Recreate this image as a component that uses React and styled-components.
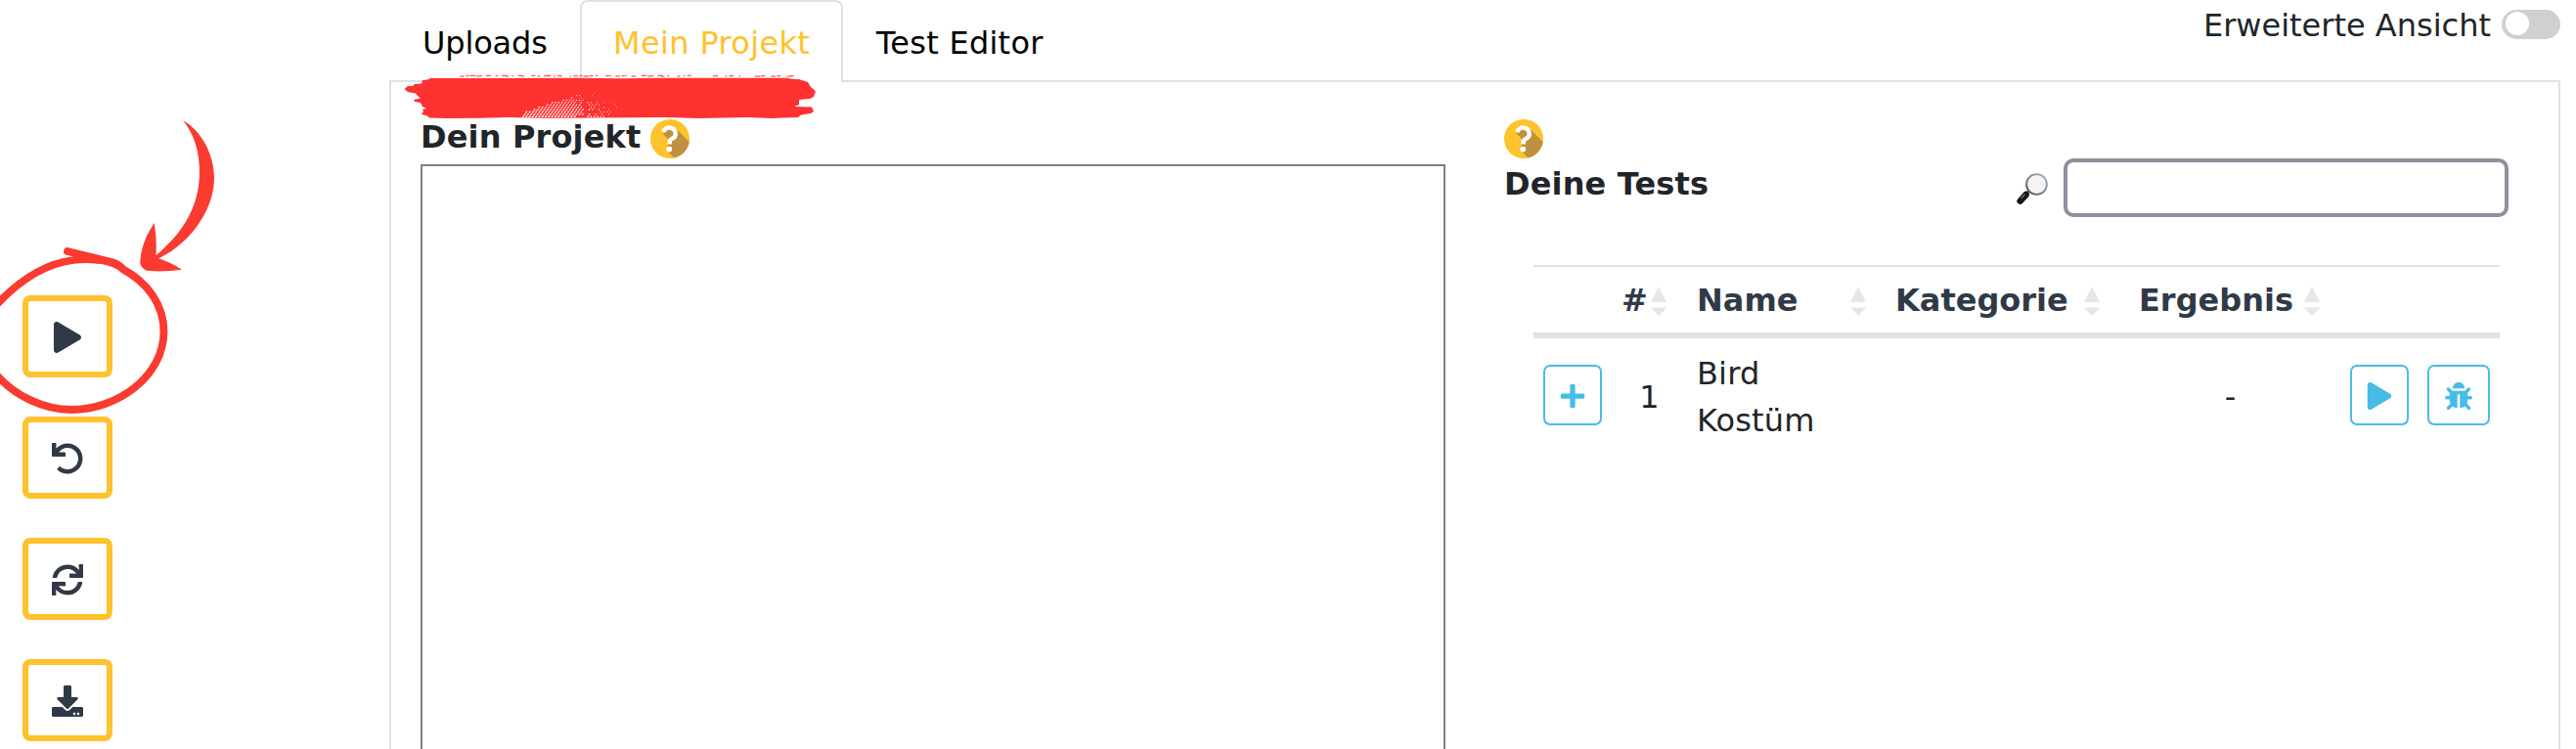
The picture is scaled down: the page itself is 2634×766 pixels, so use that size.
import React from 'react';
import styled, { createGlobalStyle } from 'styled-components';
import { FaPlay, FaUndo, FaSync, FaDownload, FaPlus, FaBug } from 'react-icons/fa';

const GlobalStyle = createGlobalStyle`
  *, *::before, *::after { box-sizing: border-box; }
  body {
    margin: 0;
    overflow: hidden;
    background: #fff;
    color: #212529;
    font-family: Verdana, "DejaVu Sans", sans-serif;
    font-size: 32px;
    line-height: 48px;
  }
`;

const Page = styled.div`
  position: relative;
  display: flex;
  height: 766px;
  overflow: hidden;
`;

const Sidebar = styled.nav`
  flex: none;
  width: 398px;
  padding: 302px 0 0 23px;
  display: flex;
  flex-direction: column;
  gap: 40px;
`;

const ToolButton = styled.button`
  flex: none;
  display: flex;
  align-items: center;
  justify-content: center;
  width: 92px;
  height: 84px;
  padding: 2px 0 0;
  border: 6px solid #ffc22d;
  border-radius: 8px;
  background: #fff;
  color: #303a47;
  font-size: 32px;
`;

const Main = styled.main`
  width: 2220px;
  display: flex;
  flex-direction: column;
`;

const TabBar = styled.div`
  flex: none;
  display: flex;
  height: 84px;
  border-bottom: 2px solid #dee2e6;
`;

const Tab = styled.div`
  flex: none;
  width: ${(p) => p.$width}px;
  height: 84px;
  padding: 18px 0 0 32px;
  border: 2px solid ${(p) => (p.$active ? '#dee2e6' : 'transparent')};
  border-bottom: 0;
  border-radius: 8px 8px 0 0;
  background: ${(p) => (p.$active ? '#fff' : 'transparent')};
  color: ${(p) => (p.$active ? '#ffc22d' : '#000')};
  letter-spacing: ${(p) => p.$spacing || 0}px;
  white-space: nowrap;
`;

const ViewSwitch = styled.div`
  margin-left: auto;
  padding-top: 2px;
  display: flex;
  gap: 11px;
  height: 50px;
  white-space: nowrap;
`;

const Track = styled.span`
  width: 60px;
  height: 30px;
  margin-top: 8px;
  padding: 2px 4px;
  border-radius: 15px;
  background: #d0d0d0;
`;

const Knob = styled.span`
  display: block;
  width: 24px;
  height: 24px;
  border-radius: 50%;
  background: #fff;
`;

const Panel = styled.section`
  flex: 1;
  display: flex;
  gap: 60px;
  padding: 32px 30px 0;
  border: solid #dee2e6;
  border-width: 0 2px;
`;

const Column = styled.div`
  width: 1048px;
  display: flex;
  flex-direction: column;
`;

const Heading = styled.h2`
  display: flex;
  align-items: flex-start;
  height: 48px;
  margin: ${(p) => p.$top || 0}px 0 0;
  font-size: 32px;
  line-height: 48px;
  font-weight: 700;
  white-space: nowrap;
  letter-spacing: 0.15px;
`;

const HeadingText = styled.span`
  width: ${(p) => p.$width}px;
`;

const HelpBadge = styled.svg`
  flex: none;
  display: block;
  width: 40px;
  height: 40px;
  margin-top: 6px;
`;

const ProjectBox = styled.div`
  flex: 1;
  margin-top: 4px;
  border: 2px solid #808080;
  border-bottom: 0;
`;

const TestsHeader = styled.div`
  display: flex;
  justify-content: space-between;
  height: 155px;
`;

const Search = styled.div`
  display: flex;
  gap: 16px;
  margin: 46px 21px 0 0;
`;

const Magnifier = styled.svg`
  width: 32px;
  height: 32px;
  margin-top: 15px;
`;

const SearchInput = styled.input`
  width: 455px;
  height: 60px;
  border: 4px solid #918e9e;
  border-radius: 10px;
  background: #fff;
  outline: none;
`;

const Table = styled.div`
  margin: 0 30px;
`;

const Row = styled.div`
  display: grid;
  grid-template-columns: 80px 76px 203px 250px 209px 1fr;
  align-items: center;
`;

const HeadRow = styled(Row)`
  height: 75px;
  border-top: 2px solid #dee2e6;
  border-bottom: 6px solid #dee2e6;
  color: #303a47;
  font-weight: 700;
`;

const BodyRow = styled(Row)`
  height: 120px;
`;

const HeadCell = styled.div`
  display: flex;
  justify-content: space-between;
  align-items: center;
  padding: 3px ${(p) => p.$end}px 0 ${(p) => p.$start || 11}px;
`;

const HeadLabel = styled.span`
  position: relative;
  top: -1px;
`;

const Cell = styled.div`
  padding: 0 ${(p) => p.$end || 10}px 0 11px;
  text-align: ${(p) => (p.$center ? 'center' : 'left')};
  letter-spacing: ${(p) => p.$spacing || 0}px;
`;

const Actions = styled.div`
  display: flex;
  gap: ${(p) => p.$gap || 0}px;
  padding: 0 10px 4px;
  justify-content: ${(p) => (p.$right ? 'flex-end' : 'flex-start')};
`;

const ActionButton = styled.button`
  display: flex;
  align-items: center;
  justify-content: center;
  width: ${(p) => p.$width || 60}px;
  height: 62px;
  padding: 2px 0 0;
  border: 2px solid #46bce6;
  border-radius: 7px;
  background: #fff;
  color: #46bce6;
  font-size: 28px;
`;

const SortArrows = styled.svg`
  flex: none;
  width: 16px;
  height: 30px;
`;

const Annotations = styled.svg`
  position: absolute;
  left: 0;
  top: 0;
  pointer-events: none;
`;

function Help() {
  return (
    <HelpBadge viewBox="0 0 40 40">
      <circle cx="20" cy="20" r="20" fill="#ffc22d" />
      <path d="M27 10.5 L39.7 23 A20 20 0 0 1 24.5 39.4 L17 32 L18 26 L18 20 L12.5 14.5 Z" fill="#be9040" />
      <circle cx="20" cy="14.3" r="4.4" fill="#be9040" />
      <path d="M13.6 13 C15 6.6 25.8 7.2 25.8 14.9 C25.8 20.2 19.8 19.4 19.8 22.6 V25.5" fill="none" stroke="#fff" strokeWidth="4.5" />
      <circle cx="19.3" cy="30.6" r="2.9" fill="#fff" />
    </HelpBadge>
  );
}

function Sort() {
  return (
    <SortArrows viewBox="0 0 16 30">
      <path d="M8 0 L16 16 H0 Z M0 21.5 H16.5 L8 30 Z" fill="#e4e6e8" />
    </SortArrows>
  );
}

function SearchGlyph() {
  return (
    <Magnifier viewBox="0 0 32 32">
      <defs>
        <linearGradient id="rim" x1="0" y1="1" x2="1" y2="0">
          <stop offset="0" stopColor="#4b4b4b" />
          <stop offset=".6" stopColor="#8d8d90" />
          <stop offset="1" stopColor="#91b9e2" />
        </linearGradient>
      </defs>
      <path d="M9.5 21.5 L12.5 18.5" stroke="#777" strokeWidth="3" />
      <path d="M3.7 28.6 L9.6 22" stroke="#15191d" strokeWidth="6.6" strokeLinecap="round" />
      <path d="M4.5 25.8 L8.5 21.5" stroke="#68727c" strokeWidth="1.5" />
      <circle cx="20.5" cy="11.5" r="10.4" fill="#f4f4f5" stroke="url(#rim)" strokeWidth="1.9" />
    </Magnifier>
  );
}

/* Dry-brush flecks: a ridge that rises to the right and thins out at its edges */
const flecks = [];
for (let row = 0; row < 12; row += 1) {
  for (let col = 0; col < 32; col += 1) {
    const x = 535 + col * 3.3 + (row % 2) * 1.6;
    const y = 119.3 - row * 2.4;
    const seed = (row * 37 + col * 53 + row * col * 7) % 17;
    const ridge = 2 + col * 0.45;
    const fade = Math.max(0, col - 15) / 16;
    if (row < ridge && seed >= fade * 17 + (row > 7 ? 7 : 0)) {
      flecks.push({ x, y, s: Math.max(0.45, 1.15 - row * 0.05 - fade * 0.6) });
    }
  }
}

const dashes = [];
for (let i = 0; i < 66; i += 1) {
  const w = 1.5 + ((i * 29) % 11) * 0.4;
  const x = 464 + i * 5.3 + ((i * 17) % 5) * 0.5;
  if (!((i * 13) % 7 === 0 || (i > 48 && i % 3 === 0) || (i > 45 && i < 50))) {
    dashes.push({ x, w, y: 76.8 + ((i * 11) % 3) * 0.35 });
  }
}

function Marks() {
  return (
    <Annotations width="900" height="766" viewBox="0 0 900 766">
      <g fill="none" stroke="#fb3a30" strokeLinecap="round" strokeLinejoin="round" strokeWidth="7.8">
        <path d="M69 257 L115 268.3 Q121 270 126 275.5 C151 289 167.5 312 167.5 339 C167.5 385 120 419 73 419 C44 419 15 404 -2 385 C-24 360 -24 333 -2 310 C20 287 47 269.5 75 266 Q88 264 100 266" />
      </g>
      <path d="M78 264 L72 259 L118 267 L127 273 L121 276 Q108 269 92 268.5 L78 269 Z" fill="#fb3a30" />
      <path
        d="M187.3 123.3 C206 134 219 158 219 182 C219 214 195 249 162 264.3 Q174 268 186 275.7 Q168 278.5 150 276.8 Q143.5 274 143.2 268 C144 254 149 241 157.7 228 Q160.7 245 159.3 261.3 C185 240 204 213 204 176 C204 156 199 138 187.3 123.3 Z"
        fill="#fb3a30"
      />
      <path
        d="M413.5 91 L417 88 L422 88 L424 86 L431 85.5 L432 82 L437 81.5 L440 80 L590 79.8 L640 80.3 L670 79.7 L805 79.8 L811 81 L817 81 L826 84 L829 89 L831 90.5 L834 93.5 L832 99 L828 101 L817 102 L817 107 L812 109 L830 109.5 L832 114 L829 116 L819 117.5 L816 120 L800 120.5 L790 121 L765 120 L715 121 L680 120 L610 120.5 L560 121 L520 120 L490 120.7 L458 121 L439 120.5 L437 118.5 L431 117 L433 114 L432 112 L436 111 L432 109 L430 105 L424 104 L423 102 L430 100.5 L427 98 L425 95.5 L417 94 Z"
        fill="#ff3131"
      />
      <g fill="#ff3131">
        {dashes.map((d) => (
          <rect key={d.x} x={d.x} y={d.y} width={d.w} height="1" />
        ))}
      </g>
      <g fill="#fff">
        {flecks.map((f) => (
          <ellipse
            key={`${f.x}-${f.y}`}
            cx={f.x}
            cy={f.y}
            rx={f.s * 0.65}
            ry={f.s * 1.25}
            transform={`rotate(38 ${f.x} ${f.y})`}
          />
        ))}
      </g>
    </Annotations>
  );
}

export default function App() {
  return (
    <Page>
      <GlobalStyle />
      <Sidebar>
        <ToolButton aria-label="Starten"><FaPlay /></ToolButton>
        <ToolButton aria-label="Zurücksetzen"><FaUndo /></ToolButton>
        <ToolButton aria-label="Aktualisieren"><FaSync /></ToolButton>
        <ToolButton aria-label="Herunterladen"><FaDownload /></ToolButton>
      </Sidebar>
      <Main>
        <TabBar>
          <Tab $width={195} $spacing={-0.15}>Uploads</Tab>
          <Tab $width={269} $spacing={0.35} $active>Mein Projekt</Tab>
          <Tab $width={240} $spacing={0.25}>Test Editor</Tab>
          <ViewSwitch>
            <span>Erweiterte Ansicht</span>
            <Track><Knob /></Track>
          </ViewSwitch>
        </TabBar>
        <Panel>
          <Column>
            <Heading>
              <HeadingText $width={235}>Dein Projekt</HeadingText>
              <Help />
            </Heading>
            <ProjectBox />
          </Column>
          <Column>
            <TestsHeader>
              <div>
                <Help />
                <Heading $top={2}>Deine Tests</Heading>
              </div>
              <Search>
                <SearchGlyph />
                <SearchInput aria-label="Suche" />
              </Search>
            </TestsHeader>
            <Table>
              <HeadRow>
                <div />
                <HeadCell $start={10} $end={20}><HeadLabel>#</HeadLabel><Sort /></HeadCell>
                <HeadCell $end={19}><HeadLabel>Name</HeadLabel><Sort /></HeadCell>
                <HeadCell $end={30}><HeadLabel>Kategorie</HeadLabel><Sort /></HeadCell>
                <HeadCell $start={10} $end={14}><HeadLabel>Ergebnis</HeadLabel><Sort /></HeadCell>
                <div />
              </HeadRow>
              <BodyRow>
                <Actions>
                  <ActionButton aria-label="Hinzufügen"><FaPlus /></ActionButton>
                </Actions>
                <Cell $center>1</Cell>
                <Cell $spacing={0.15}>Bird<br />Kostüm</Cell>
                <Cell />
                <Cell $center $end={13}>-</Cell>
                <Actions $gap={19} $right>
                  <ActionButton aria-label="Test starten"><FaPlay /></ActionButton>
                  <ActionButton aria-label="Test debuggen" $width={64}><FaBug /></ActionButton>
                </Actions>
              </BodyRow>
            </Table>
          </Column>
        </Panel>
      </Main>
      <Marks />
    </Page>
  );
}
